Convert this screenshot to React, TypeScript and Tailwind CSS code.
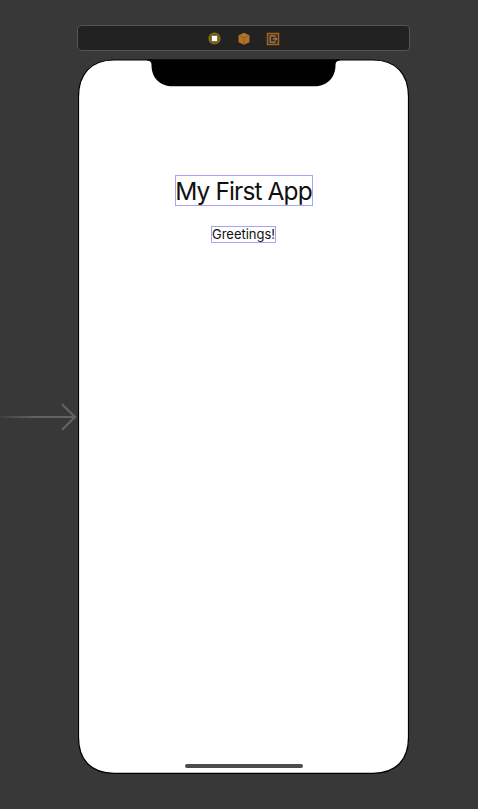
function SceneDock() {
  return (
    <header className="ml-[77px] flex h-[26px] w-[333px] items-center justify-center gap-4 rounded-[4px] border border-[#545454] bg-[#222222] pt-px pl-px">
      <svg width="13" height="13" viewBox="0 0 13 13" aria-label="View controller">
        <circle cx="6.5" cy="6.5" r="5.4" fill="#6b5618" stroke="#8a6b14" strokeWidth="1.4" />
        <rect x="3.8" y="3.8" width="5.4" height="5.4" fill="#fff" />
      </svg>
      <svg width="14" height="14" viewBox="0 0 14 14" aria-label="First responder">
        <path d="M7 .8 12.5 3.2v7L7 12.8 1.5 10.2v-7Z" fill="#b8701f" />
        <path d="M2 3.6 7 6l5-2.4M7 6v6.2" fill="none" stroke="#8a5a20" strokeWidth=".8" />
        <path d="M4.8 3.6 7 2.8l2.2.8M4 6v3M8.6 8.3l1.7-.8v2l-1.7.8Z" fill="none" stroke="#9a7d55" strokeWidth=".9" />
      </svg>
      <svg className="-ml-px" width="14" height="14" viewBox="0 0 14 14" aria-label="Exit">
        <rect x="1.5" y="1.5" width="11" height="11" fill="#3f2c17" stroke="#a8611a" strokeWidth="1.5" />
        <path d="M8.8 5.2V3.8H4.2v6.4h4.6V8.8M6.8 7h4M9.3 5.7 10.8 7 9.3 8.3" fill="none" stroke="#b39778" strokeWidth="1" />
      </svg>
    </header>
  );
}

function EntryArrow() {
  return (
    <svg className="mt-[343px] h-[30px] w-[78px] shrink-0" viewBox="0 0 78 30" fill="none">
      <defs>
        <linearGradient id="entry" x1="0" y1="0" x2="36" y2="0" gradientUnits="userSpaceOnUse">
          <stop stopColor="#404040" />
          <stop offset="1" stopColor="#626262" />
        </linearGradient>
      </defs>
      <path d="M0 13.9h75v2.2H0Z" fill="url(#entry)" />
      <path d="M62 2.2 75 15 62 27.8" stroke="#626262" strokeWidth="2.3" />
    </svg>
  );
}

function Phone() {
  return (
    <main className="grid h-[715px] w-[331px]">
      <svg className="col-start-1 row-start-1" width="331" height="715" viewBox="0 0 331 715">
        <path
          d="M36 1H295C318 1 330.5 15 330.5 38V678C330.5 701 318 714.3 295 714.3H36C13 714.3.5 701 .5 678V38C.5 15 13 1 36 1Z"
          fill="#fff"
          stroke="#000"
          strokeWidth="1.2"
        />
        <path d="M69 .5H262V1.5Q257.5 1.5 257.5 6C257.5 19 249 27.3 236 27.3H95C82 27.3 73.5 19 73.5 6Q73.5 1.5 69 1.5Z" fill="#000" />
      </svg>
      <div className="z-10 col-start-1 row-start-1 flex flex-col items-center pt-[116px] font-['Inter','Liberation_Sans',sans-serif] text-[#111111]">
        <h1 className="flex h-[31px] w-[138px] items-center justify-center border border-[#a5a3fa] pt-[2px] text-[24.5px] leading-none tracking-[-0.9px] whitespace-nowrap">
          My First App
        </h1>
        <p className="mt-[20px] flex h-[17px] w-[65px] items-center justify-center border border-[#a5a3fa] text-[13px] leading-none tracking-[-0.03px] whitespace-nowrap">
          Greetings!
        </p>
        <div className="mt-auto mb-[6px] h-1 w-[118px] rounded-full bg-[#4c4c4c]" />
      </div>
    </main>
  );
}

export default function App() {
  return (
    <div className="h-[809px] w-[478px] overflow-hidden bg-[#383838] pt-[25px]">
      <SceneDock />
      <div className="mt-2 flex">
        <EntryArrow />
        <Phone />
      </div>
    </div>
  );
}
